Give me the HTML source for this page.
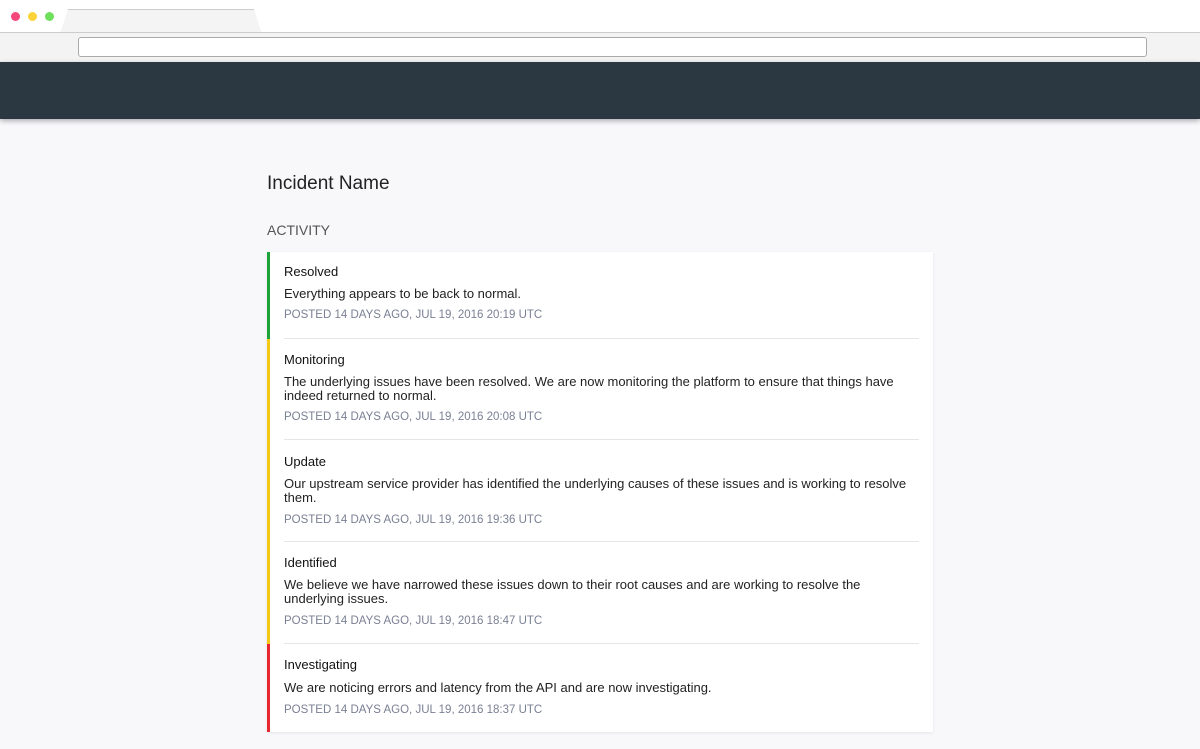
<!DOCTYPE html>
<html><head><style>
*{margin:0;padding:0;box-sizing:border-box}
body{width:1200px;height:749px;background:#f8f8fb;font-family:"Liberation Sans",sans-serif;position:relative;overflow:hidden}
.top{position:absolute;left:0;top:0;width:1200px;height:32px;background:#fff}
.dot{position:absolute;top:12px;width:9px;height:9px;border-radius:50%}
.tab{position:absolute;left:60px;top:9px;width:202px;height:25px;background:#f4f4f4;border:1px solid #ccc;border-bottom:none;clip-path:polygon(4% 0,96% 0,100% 100%,0 100%)}
.tool{position:absolute;left:0;top:32px;width:1200px;height:30px;background:#f3f3f3;border-top:1px solid #ccc}
.url{position:absolute;left:78px;top:37px;width:1069px;height:20px;background:#fff;border:1px solid #aaa;border-radius:3px}
.hdr{position:absolute;left:0;top:62px;width:1200px;height:57px;background:#2b3741;box-shadow:0 2px 5px rgba(0,0,0,.3)}
h1{position:absolute;left:267px;top:173px;font-size:19px;font-weight:normal;color:#222}
.act{position:absolute;left:267px;top:222px;font-size:14px;color:#555}
.card{position:absolute;left:267px;top:252px;width:666px;height:480px;background:#fff;box-shadow:0 1px 3px rgba(0,0,0,.08)}
.it{position:absolute;left:0;width:666px;border-left:3px solid}
.it .sep{position:absolute;left:14px;right:14px;bottom:0;height:1px;background:#e6e6e6}
.t{position:absolute;left:14px;font-size:13px;color:#111}
.b{position:absolute;left:14px;width:630px;font-size:13px;line-height:14px;color:#222}
.p{position:absolute;left:14px;font-size:11.5px;color:#7a8094}
</style></head><body>
<div class="top"></div>
<div class="dot" style="left:11px;background:#f5477c"></div>
<div class="dot" style="left:28px;background:#fbd338"></div>
<div class="dot" style="left:45px;background:#6fe05b"></div>
<div class="tab"></div>
<div class="tool"></div>
<div class="url"></div>
<div class="hdr"></div>
<h1>Incident Name</h1>
<div class="act">ACTIVITY</div>
<div class="card">
<div class="it" style="top:0;height:87px;border-color:#1ea33a"><div class="t" style="top:12px">Resolved</div><div class="b" style="top:35px">Everything appears to be back to normal.</div><div class="p" style="top:57px">POSTED 14 DAYS AGO, JUL 19, 2016 20:19 UTC</div><div class="sep"></div></div>
<div class="it" style="top:87px;height:101px;border-color:#f4c916"><div class="t" style="top:13px">Monitoring</div><div class="b" style="top:36px">The underlying issues have been resolved. We are now monitoring the platform to ensure that things have indeed returned to normal.</div><div class="p" style="top:72px">POSTED 14 DAYS AGO, JUL 19, 2016 20:08 UTC</div><div class="sep"></div></div>
<div class="it" style="top:188px;height:102px;border-color:#f4c916"><div class="t" style="top:14px">Update</div><div class="b" style="top:37px">Our upstream service provider has identified the underlying causes of these issues and is working to resolve them.</div><div class="p" style="top:74px">POSTED 14 DAYS AGO, JUL 19, 2016 19:36 UTC</div><div class="sep"></div></div>
<div class="it" style="top:290px;height:102px;border-color:#f4c916"><div class="t" style="top:13px">Identified</div><div class="b" style="top:36px">We believe we have narrowed these issues down to their root causes and are working to resolve the underlying issues.</div><div class="p" style="top:73px">POSTED 14 DAYS AGO, JUL 19, 2016 18:47 UTC</div><div class="sep"></div></div>
<div class="it" style="top:392px;height:88px;border-color:#e8282f"><div class="t" style="top:13px">Investigating</div><div class="b" style="top:37px">We are noticing errors and latency from the API and are now investigating.</div><div class="p" style="top:60px">POSTED 14 DAYS AGO, JUL 19, 2016 18:37 UTC</div></div>
</div>
</body></html>
